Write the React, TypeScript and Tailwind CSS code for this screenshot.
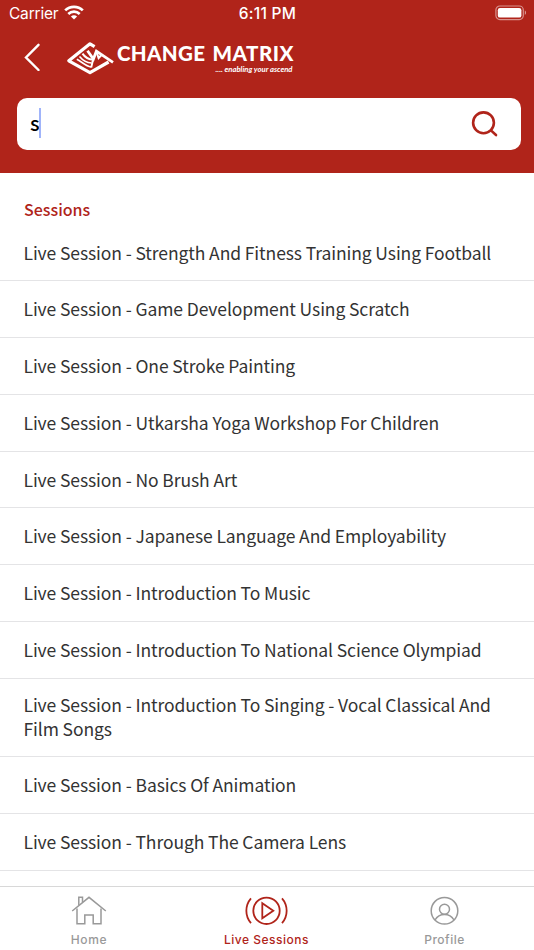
import React from "react";

const sessions = [
  "Live Session - Strength And Fitness Training Using Football",
  "Live Session - Game Development Using Scratch",
  "Live Session - One Stroke Painting",
  "Live Session - Utkarsha Yoga Workshop For Children",
  "Live Session - No Brush Art",
  "Live Session - Japanese Language And Employability",
  "Live Session - Introduction To Music",
  "Live Session - Introduction To National Science Olympiad",
  "Live Session - Introduction To Singing - Vocal Classical And Film Songs",
  "Live Session - Basics Of Animation",
  "Live Session - Through The Camera Lens",
];

const StatusBar = (): React.JSX.Element => {
  return (
    <div className="grid grid-cols-3 items-center h-7 pl-[9px] pr-[7px] [font-family:'Inter',sans-serif] text-white">
      <div className="flex items-center gap-[6px]">
        <span className="text-[15.5px] tracking-[-0.2px]">Carrier</span>
        <svg className="-mt-[3px]" width="20" height="15" viewBox="0 0 20 15" fill="none" stroke="white" strokeWidth="2.7">
          <path d="M1.2 5.4C6 0.6 14 0.6 18.8 5.4" />
          <path d="M4.3 8.9C7.5 5.9 12.5 5.9 15.7 8.9" />
          <path d="M10 14.6L6.9 11.5C8.6 9.9 11.4 9.9 13.1 11.5Z" fill="white" stroke="none" />
        </svg>
      </div>
      <span className="text-center text-[15.5px] font-medium tracking-[0.3px] whitespace-nowrap pr-px">6:11 PM</span>
      <svg className="justify-self-end -mt-[2px]" width="32" height="16" viewBox="0 0 32 16" fill="none">
        <rect x="0.9" y="1" width="27.4" height="13.6" rx="4" stroke="white" strokeOpacity="0.5" strokeWidth="1.2" />
        <rect x="2.8" y="3" width="23.6" height="9.6" rx="2.2" fill="white" />
        <path d="M29.8 5.6C31.4 6.2 31.4 9.4 29.8 10Z" fill="white" fillOpacity="0.55" />
      </svg>
    </div>
  );
};

const Logo = (): React.JSX.Element => {
  return (
    <svg width="230" height="36" viewBox="0 0 230 36" fill="none">
      {/* Diamond mark */}
      <g stroke="white" strokeWidth="3.2">
        <path d="M28.6 6.6L24 3.8L2.8 20.8L24 32.6L42.6 22" strokeLinejoin="round" />
        <path d="M21.5 10.8L27.4 19L30.4 11.2L47 22.3" strokeWidth="2.8" />
        <path d="M30.6 12L32.6 18L35.5 15" strokeWidth="2" />
        <path d="M16.5 13.6C19.5 18 23.5 19.5 27 19.6L25.2 27.6" strokeWidth="2" />
        <path d="M13.5 16.4C16.5 20 21 22.6 25.5 23" strokeWidth="1.6" />
        <path d="M10.8 19.3C15.5 21.5 19.5 26 25 27" strokeWidth="1.6" />
      </g>
      <g fill="white" className="[font-family:'Lato',sans-serif] font-black text-[20.5px]">
        <text x="51" y="21" textLength="88">CHANGE</text>
        <text x="146.5" y="21" textLength="81">MATRIX</text>
      </g>
      <text x="149.5" y="32" fill="white" textLength="77" lengthAdjust="spacingAndGlyphs" className="[font-family:'Lato',cursive] font-bold italic text-[8px]">
        .... enabling your ascend
      </text>
    </svg>
  );
};

const Header = (): React.JSX.Element => {
  return (
    <header className="h-[173px] shrink-0 bg-[#b0241a]">
      <StatusBar />
      <div className="flex items-center h-[60px] pl-6">
        <svg className="-mt-[2px]" width="17" height="28" viewBox="0 0 17 28" fill="none" stroke="white" strokeWidth="2.4" strokeLinecap="round">
          <path d="M14.5 1.8L2 14.5L14.5 27" />
        </svg>
        <div className="ml-[25px]">
          <Logo />
        </div>
      </div>
      <div className="flex items-center justify-between ml-[17px] mr-[13px] mt-[10px] h-[52px] rounded-[10px] bg-white pl-[13px] pr-[22px]">
        <div className="flex items-center -mt-[2px]">
          <span className="[font-family:'Noto_Sans_CJK_SC',sans-serif] font-medium text-[20px] leading-6 text-black">s</span>
          <span className="w-[2px] h-[30px] -ml-px bg-[#a0b4fa]" />
        </div>
        <svg width="28" height="28" viewBox="0 0 28 28" fill="none" stroke="#b0241a" strokeWidth="2.6" strokeLinecap="round">
          <circle cx="12.5" cy="12.8" r="10.4" />
          <path d="M20.2 20.6L25 25" />
        </svg>
      </div>
    </header>
  );
};

const TabBar = (): React.JSX.Element => {
  return (
    <nav className="grid grid-cols-3 h-16 shrink-0 border-t border-[#d8d8d8] bg-white [font-family:'Inter',sans-serif] text-xs font-medium tracking-[0.5px] text-[#999]">
      <div className="flex flex-col items-center pt-2">
        <svg width="36" height="32" viewBox="0 0 36 32" fill="none" stroke="currentColor" strokeWidth="1.5">
          <path d="M1.2 16L18 2.3L34.8 16" />
          <path d="M6 13.5V28.7H13.8V20H22.2V28.7H30V13.5" />
          <path d="M7.8 10V2.2H11.5V7" />
        </svg>
        <span className="mt-[3px] leading-5 tracking-[0.7px]">Home</span>
      </div>
      <div className="flex flex-col items-center pt-2 pr-px text-[#b0241a]">
        <svg width="44" height="32" viewBox="0 0 44 32" fill="none" stroke="currentColor" strokeWidth="1.8">
          <circle cx="21.5" cy="15.8" r="13.2" />
          <path d="M17.3 8.3V23.3L28.3 15.8Z" />
          <path d="M6 3.3C-0.2 10.5 -0.2 21 6 28.2" />
          <path d="M37 3.3C43.2 10.5 43.2 21 37 28.2" />
        </svg>
        <span className="mt-[3px] leading-5">Live Sessions</span>
      </div>
      <div className="flex flex-col items-center pt-2 pr-px">
        <svg width="32" height="32" viewBox="0 0 32 32" fill="none" stroke="currentColor" strokeWidth="1.5">
          <circle cx="15.5" cy="15.8" r="13.3" />
          <circle cx="15.5" cy="14.3" r="5" />
          <path d="M6 25C8 21.5 11.5 19.5 15.5 19.5C19.5 19.5 23 21.5 25 25" />
        </svg>
        <span className="mt-[3px] leading-5">Profile</span>
      </div>
    </nav>
  );
};

const App = (): React.JSX.Element => {
  return (
    <div className="flex flex-col h-screen overflow-hidden bg-white">
      <Header />

      {/* Search results */}
      <main className="flex-1 min-h-0 overflow-hidden pt-6 [font-family:'Noto_Sans_CJK_SC',sans-serif]">
        <h2 className="px-6 text-[16px] leading-6 font-medium text-[#b0241a]">Sessions</h2>
        <ul className="mt-[3.7px]">
          {sessions.map((title) => (
            <li
              key={title}
              className="flex items-center min-h-[56.75px] pl-[23.5px] pr-6 pt-[14.5px] pb-[14.3px] border-b border-[#e4e4e6] text-[17.5px] leading-[24.3px] tracking-[-0.1px] text-[#333]"
            >
              {title}
            </li>
          ))}
        </ul>
      </main>

      <TabBar />
    </div>
  );
};

export default App;
